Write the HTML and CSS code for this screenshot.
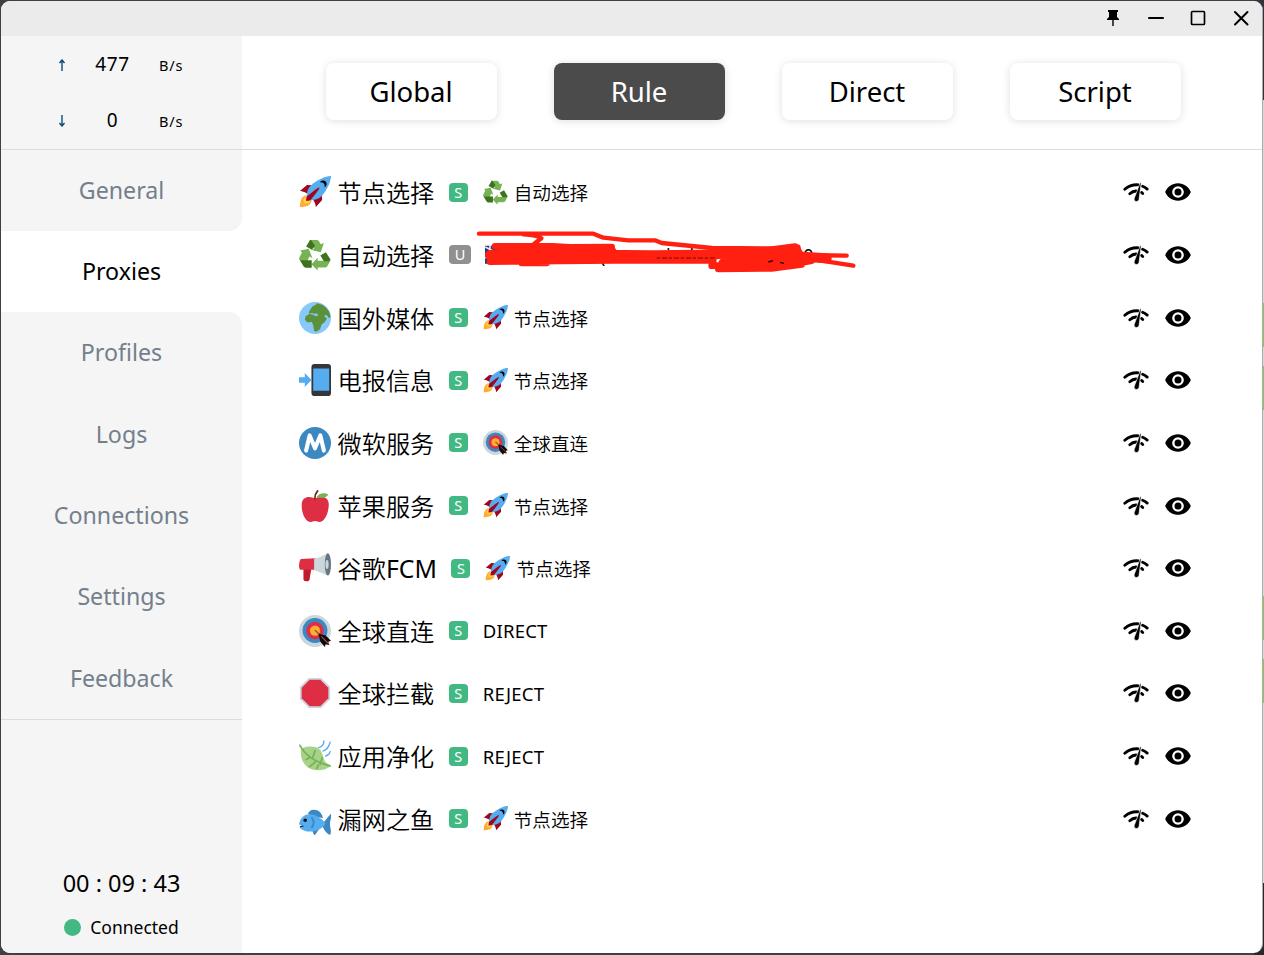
FILE: index.html
```html
<!DOCTYPE html>
<html lang="zh-CN">
<head>
<meta charset="utf-8">
<title>Proxies</title>
<link rel="stylesheet" href="styles.css">
</head>
<body>
<svg class="defs" aria-hidden="true">
  <symbol id="rocket" viewBox="0 0 36 36"><path fill="#A0041E" d="M1 17l8-7 16 1 1 16-7 8s0-6-6-12-12-6-12-6z"/><path fill="#FFAC33" d="M1 35s0-8 3-11 11-2.800 11-2.800S15 29 12 32 1 35 1 35z"/><circle fill="#FFCC4D" cx="9" cy="27" r="4"/><path fill="#55ACEE" d="M36 0S26 0 14 10c-6 5-6 14-4 16s11 2 16-4C36 10 36 0 36 0z"/><path d="M27 5c-1.600 0-3 1-3.600 2.400.5-.2 1-.4 1.600-.4a4 4 0 0 1 3.600 5.600C30 12 31 10.600 31 9a4 4 0 0 0-4-4z"/><path fill="#A0041E" d="M8 28s0-4 1-5 13-11 14-10-9 13-10 14-5 1-5 1z"/></symbol>
  <symbol id="recycle" viewBox="0 0 36 36"><path fill="#77B255" d="M12 1h8q1.500 0 2.200 1.300L24.500 6l3.500-1.500L24.500 15 14 12.500l3.300-2L12 3zM1.500 13L11 11l4 10.300-3.300-1.600L7.500 29 .8 24q-1.200-2 0-4l2.500-4.500zM35 22q1 1.500 0 3l-3 5.500q-.8 1.500-2.500 1.500H21v3.500l-7-7 7-7.500v3.500h8z"/><path fill="#3E721D" d="M12.500 1L8 8.500l6.500 3.700L18 7.500l-4.200-6zM1 24l4.200 7q.8 1.300 2.500 1.300h6.600v-8.500H7.500zM24 18.500l6.200-3.700L35 22.500 34 25h-6z"/></symbol>
  <symbol id="globe" viewBox="0 0 36 36"><circle cx="18" cy="18" r="18" fill="#88C9F9"/><path fill="#5C913B" d="M15 5l4-2 1-1.500 6 1.500 4 3 4 5 1.500 6-2 1-2-3-3-.5 1 3 2 1-3 4.500-3 2-2 6-4 2.500-2.500-1-1-6-1.500-4-5 .5-3-3 1-4 4-2.500 4 .5 2 1.500 4 .3-1-3-4 .5-1.500-1-4 1 .5-3z"/></symbol>
  <symbol id="phone" viewBox="0 0 36 36"><rect x="14" width="22" height="36" rx="3.500" fill="#31373D"/><path fill="#55ACEE" d="M16 5h18v25H16zM14 18L6.500 10v5H0v6h6.500v5z"/></symbol>
  <symbol id="metro" viewBox="0 0 36 36"><circle cx="18" cy="18" r="18" fill="#3B88C3"/><path d="M8 26.500l4-17 6 14.500 6-14.500 4 17" fill="none" stroke="#fff" stroke-width="4.600" stroke-linecap="round" stroke-linejoin="round"/></symbol>
  <symbol id="dart" viewBox="0 0 36 36"><circle cx="18" cy="18" r="18" fill="#CCD6DD"/><circle cx="18" cy="17.500" r="14" fill="#3B88C3"/><circle cx="18" cy="17.500" r="9.800" fill="#DD2E44"/><circle cx="18" cy="17.500" r="5.800" fill="#FFAC33"/><path stroke="#8b4b30" stroke-width="1.500" d="M18 17l11 11"/><path d="M22 21l8 2 6 6-3 1 1 4-4-1-1 3-5-6z" fill="#12090a"/><path d="M25 24l9 9" stroke="#A8544C" stroke-width="1.200"/></symbol>
  <symbol id="apple" viewBox="0 0 36 36"><path fill="#DD2E44" d="M18 10c4-4 16-4 15.500 7C33 28 28 36 23 36c-2 0-3-1-5-1s-3 1-5 1C8 36 3 28 3 17 3 6 14 7 18 10z"/><path fill="#77B255" d="M20 8c3-5 9-5 13-3-2 4-9 5-13 3z"/><path d="M18 10q-.5-5 3-9" fill="none" stroke="#662113" stroke-width="1.800" stroke-linecap="round"/></symbol>
  <symbol id="horn" viewBox="0 0 36 36"><path fill="#BE1931" d="M5 18h9l-2 12q0 3-4 3-3 0-3-2z"/><path fill="#DD2E44" d="M2 8l17-1v13L2 20q-2 0-2-5t2-7z"/><path fill="#CCD6DD" d="M17 7.500q8-1.500 15-6v25q-7-4-15-6z"/><ellipse cx="32.500" cy="14" rx="3.500" ry="12.500" fill="#66757F"/><ellipse cx="31.500" cy="14" rx="1.800" ry="5" fill="#CCD6DD"/></symbol>
  <symbol id="stop" viewBox="0 0 36 36"><path fill="#CCD6DD" d="M11 1h14l10 10v14L25 35H11L1 25V11z"/><path fill="#DD2E44" d="M12 3h12l9 9v12l-9 9H12l-9-9V12z"/></symbol>
  <symbol id="leaf" viewBox="0 0 36 36"><path fill="#A6D388" d="M2 10c6-3 11-3 16-2 8 2 8 8 10 13 1 4 4 6 8 8-8 7-22 7-29-1C2 22 2 16 2 10z"/><path d="M1 6q9 17 34 23M12 20l-4 2M18 25l-6 5M15 21l3-9M24 27l2-7M22 28l-2 4" fill="none" stroke="#77B255" stroke-width="2" stroke-linecap="round"/><path d="M28 1q0 6-6 7.500M35 2.500q-2 8-8 10M35 13q-1 4-5 5" fill="none" stroke="#55ACEE" stroke-width="1.500" stroke-linecap="round"/></symbol>
  <symbol id="fish" viewBox="0 0 36 36"><path fill="#3B88C3" d="M10 12q3-6 9-4 6 1 8 9l-13-2zM26 23c4-3 5-6 10-11 1 6-2 9-1 13 0 4 2 6 0 11-4-2-8-6-9-13zM15 30l8-1-5 7q-2 0-3-6z"/><path fill="#55ACEE" d="M0 24C3 8 20 10 30 23c-6 10-22 12-29 5l4-1z"/><circle cx="7" cy="19.500" r="2" fill="#111"/><path d="M14 16q5 6 0 12" fill="none" stroke="#3B88C3" stroke-width="2"/><path d="M1 27l4-1" stroke="#292F33" stroke-width="1.500"/></symbol>
  <symbol id="check" viewBox="0 0 26 22"><path d="M1.800 8.300Q7.500 3.200 15.500 3.800M19.500 5.200q2.500 1 4.700 2.900M6.800 12.700q2.900-2.600 6.200-2.700M18.500 11.400l1.200 1.100" fill="none" stroke="#000" stroke-width="2.800" stroke-linecap="round"/><path d="M17.300 1.500q1-.2.800 1L16 18.500q-.5 2-2.500 2-3 0-2.300-3z" stroke="#fff" stroke-width=".6"/></symbol>
  <symbol id="eye" viewBox="0 0 24 24"><path fill-rule="evenodd" d="M12 4.500C7 4.500 2.700 7.600 1 12c1.700 4.400 6 7.500 11 7.500s9.300-3.100 11-7.500c-1.700-4.400-6-7.500-11-7.500zM12 17a5 5 0 1 1 0-10 5 5 0 0 1 0 10zm0-8a3 3 0 1 0 0 6 3 3 0 0 0 0-6z"/></symbol>
</svg>
<div class="window">
  <header class="titlebar">
    <svg width="20" height="20" viewBox="0 0 20 20"><path d="M5 2h10v2h-1v5l2 2v1H4v-1l2-2V4H5z"/><path d="M10 11v7" stroke="#000" stroke-width="1.400"/></svg>
    <svg width="20" height="20" viewBox="0 0 20 20"><path d="M3 10h14" stroke="#000" stroke-width="2" stroke-linecap="round"/></svg>
    <svg width="20" height="20" viewBox="0 0 20 20"><rect x="3.500" y="3.500" width="13" height="13" rx="1" fill="none" stroke="#000" stroke-width="1.700"/></svg>
    <svg width="20" height="20" viewBox="0 0 20 20"><path d="M4 4l12.500 12.500M16.500 4L4 16.500" stroke="#000" stroke-width="2" stroke-linecap="round"/></svg>
  </header>
  <div class="content">
    <aside class="sidebar">
      <div class="traffic">
        <div class="speed"><svg class="arrow" viewBox="0 0 8 12"><path d="M4 12V1M1.500 4L4 1l2.500 3"/></svg><span class="value">477</span><span class="unit">B/s</span></div>
        <div class="speed"><svg class="arrow" viewBox="0 0 8 12"><path d="M4 0v11M1.500 8L4 11l2.500-3"/></svg><span class="value">0</span><span class="unit">B/s</span></div>
      </div>
      <nav class="nav">
        <a class="item above">General</a><a class="item active">Proxies</a><a class="item below">Profiles</a><a class="item">Logs</a><a class="item">Connections</a><a class="item">Settings</a><a class="item">Feedback</a>
      </nav>
      <div class="status"><div class="clock">00 : 09 : 43</div><div class="connected"><i class="dot"></i>Connected</div></div>
    </aside>
    <main class="main">
      <div class="modes"><button class="mode">Global</button><button class="mode selected">Rule</button><button class="mode">Direct</button><button class="mode">Script</button></div>
      <div class="groups">
        <div class="row"><svg class="emoji"><use href="#rocket"/></svg><span class="name">节点选择</span><span class="badge">S</span><span class="now"><svg class="mini"><use href="#recycle"/></svg><span class="cjk">自动选择</span></span><svg class="check"><use href="#check"/></svg><svg class="eye"><use href="#eye"/></svg></div>
        <div class="row"><svg class="emoji"><use href="#recycle"/></svg><span class="name">自动选择</span><span class="badge auto">U</span>
          <svg class="scribble" viewBox="0 0 1200 165"><path fill="#203a80" d="M45 62h100v54H45z"/><path d="M46 66l35 18M46 99l35-20M60 60v50" stroke="#e5e5f5" stroke-width="5"/><text x="390" y="114" class="hidden-name">(</text><text x="555" y="110" class="hidden-name">nisal</text><text x="820" y="110" class="hidden-name">l</text><text x="880" y="110" class="hidden-name">om</text><text x="1000" y="112" class="hidden-name">0</text>
          <g fill="none" stroke="#ff2012" stroke-linecap="round" stroke-linejoin="round"><path stroke-width="13" d="M27 26h343l30 12 75 8h80l20 8 150 15 250 2M160 28q45 3 54 12l-22 17M985 65l5 25 140 2M1010 100l140 22"/><path stroke-width="20" d="M75 64h173l50 3 127-1M370 84l180 2 280-3 145-18M60 90h480l200 3 230-18M60 110l370-4h300M155 114h75M725 122h220l80-15M745 132l160-2 90-12"/><path stroke-width="30" d="M100 80h325M60 90l455 8M800 95l150-3 120 8M760 115l230-15M975 72l10 15"/></g><path d="M560 99h175" stroke="#7a0805" stroke-width="3" stroke-dasharray="10 6 15 5"/><path d="M895 111l14-4M930 112l12 3" stroke="#170202" stroke-width="4"/></svg>
          <svg class="check"><use href="#check"/></svg><svg class="eye"><use href="#eye"/></svg></div>
        <div class="row"><svg class="emoji"><use href="#globe"/></svg><span class="name">国外媒体</span><span class="badge">S</span><span class="now"><svg class="mini"><use href="#rocket"/></svg><span class="cjk">节点选择</span></span><svg class="check"><use href="#check"/></svg><svg class="eye"><use href="#eye"/></svg></div>
        <div class="row"><svg class="emoji"><use href="#phone"/></svg><span class="name">电报信息</span><span class="badge">S</span><span class="now"><svg class="mini"><use href="#rocket"/></svg><span class="cjk">节点选择</span></span><svg class="check"><use href="#check"/></svg><svg class="eye"><use href="#eye"/></svg></div>
        <div class="row"><svg class="emoji"><use href="#metro"/></svg><span class="name">微软服务</span><span class="badge">S</span><span class="now"><svg class="mini"><use href="#dart"/></svg><span class="cjk">全球直连</span></span><svg class="check"><use href="#check"/></svg><svg class="eye"><use href="#eye"/></svg></div>
        <div class="row"><svg class="emoji"><use href="#apple"/></svg><span class="name">苹果服务</span><span class="badge">S</span><span class="now"><svg class="mini"><use href="#rocket"/></svg><span class="cjk">节点选择</span></span><svg class="check"><use href="#check"/></svg><svg class="eye"><use href="#eye"/></svg></div>
        <div class="row"><svg class="emoji"><use href="#horn"/></svg><span class="name">谷歌<span class="fcm">FCM</span></span><span class="badge">S</span><span class="now"><svg class="mini"><use href="#rocket"/></svg><span class="cjk">节点选择</span></span><svg class="check"><use href="#check"/></svg><svg class="eye"><use href="#eye"/></svg></div>
        <div class="row"><svg class="emoji"><use href="#dart"/></svg><span class="name">全球直连</span><span class="badge">S</span><span class="now latin">DIRECT</span><svg class="check"><use href="#check"/></svg><svg class="eye"><use href="#eye"/></svg></div>
        <div class="row"><svg class="emoji"><use href="#stop"/></svg><span class="name">全球拦截</span><span class="badge">S</span><span class="now latin">REJECT</span><svg class="check"><use href="#check"/></svg><svg class="eye"><use href="#eye"/></svg></div>
        <div class="row"><svg class="emoji"><use href="#leaf"/></svg><span class="name">应用净化</span><span class="badge">S</span><span class="now latin">REJECT</span><svg class="check"><use href="#check"/></svg><svg class="eye"><use href="#eye"/></svg></div>
        <div class="row"><svg class="emoji"><use href="#fish"/></svg><span class="name">漏网之鱼</span><span class="badge">S</span><span class="now"><svg class="mini"><use href="#rocket"/></svg><span class="cjk">节点选择</span></span><svg class="check"><use href="#check"/></svg><svg class="eye"><use href="#eye"/></svg></div>
      </div>
    </main>
  </div>
</div>
</body>
</html>
```
FILE: styles.css
```css
* { box-sizing: border-box; }
html { background: #3d4143; }
body {
  margin: 0; padding: 1px 1px 2px 1px; height: 955px; overflow: hidden; color: #000;
  font-family: "Noto Sans", "Noto Sans CJK SC", sans-serif;
  background: linear-gradient(#30353a 0 100px, #d8d8d8 100px 303px, #87c661 303px 347px, #d8d8d8 347px 366px, #87c661 366px 410px, #d8d8d8 410px 596px, #87c661 596px 640px, #d8d8d8 640px 659px, #87c661 659px 703px, #d8d8d8 703px 883px, #252b2d 883px) right / 10px 100% no-repeat, #3d4143;
}
.defs { position: absolute; width: 0; height: 0; }
.window { height: 952px; border-radius: 9px; overflow: hidden; background: #fff; border-right: 1px solid #aaa; display: flex; flex-direction: column; }
.titlebar { height: 35px; background: #ebebeb; display: flex; justify-content: flex-end; align-items: center; gap: 22.700px; padding: 0 11px 2px 0; flex: none; }
.content { display: flex; flex: 1; }
.sidebar { width: 241px; display: flex; flex-direction: column; }
.traffic { height: 114px; background: #f5f5f5; border-bottom: 1px solid #dcdcdc; }
.speed { height: 56px; display: flex; align-items: center; padding: 0 0 1px 57px; }
.arrow { width: 8px; height: 12px; margin-top: 2px; fill: none; stroke: #0d4b79; stroke-width: 1.400; }
.value { width: 93px; text-align: center; font-size: 19px; letter-spacing: .6px; }
.unit { font-size: 14.500px; letter-spacing: .9px; margin-top: 2px; }
.nav { height: 569px; display: grid; grid-template-rows: 81px 81px repeat(5, 1fr); }
.item { display: flex; align-items: center; justify-content: center; background: #f5f5f5; color: #73808c; font-size: 23.200px; padding-bottom: 1px; }
.item.active { background: #fff; color: #000; }
.above { border-bottom-right-radius: 13px; }
.below { border-top-right-radius: 13px; }
.status { flex: 1; background: #f5f5f5; border-top: 1px solid #dcdcdc; display: flex; flex-direction: column; justify-content: flex-end; align-items: center; padding-bottom: 13px; }
.clock { font-size: 23.500px; line-height: 32px; margin-bottom: 15px; }
.connected { font-size: 17.500px; line-height: 26px; display: flex; align-items: center; gap: 9px; }
.dot { width: 17px; height: 17px; border-radius: 50%; background: #42b983; }
.main { flex: 1; }
.modes { height: 114px; border-bottom: 1px solid #dcdcdc; padding: 27px 81px 0 84px; display: flex; justify-content: space-between; }
.mode { width: 171px; height: 57px; border: 0; border-radius: 8px; background: #fff; box-shadow: 0 1px 9px rgba(0,0,0,.13); font: 27.500px "Noto Sans", sans-serif; color: #000; padding: 0 1px 1px 0; }
.mode.selected { background: #4b4b4b; color: #fff; }
.groups { padding: 11px 70px 0 57px; }
.row { height: 62.650px; display: flex; align-items: center; position: relative; }
.emoji { width: 32px; height: 32px; margin-right: 6.500px; }
.name { font-size: 24.200px; line-height: 34px; padding-top: 2px; font-weight: 350; }
.fcm { font-size: 24.800px; font-weight: 400; line-height: 1; }
.badge { min-width: 19px; height: 19px; padding: 0 5px; margin-left: 14.500px; margin-right: 15px; border-radius: 4px; background: #42b983; color: #fff; font-size: 14.500px; line-height: 18px; text-align: center; }
.auto { background: #909090; padding: 0 6px; }
.now { display: flex; align-items: center; font-size: 18.600px; font-weight: 350; line-height: 26px; }
.cjk { padding-top: 2px; }
.latin { font-weight: 400; font-size: 18.500px; letter-spacing: .2px; padding-top: 1px; }
.mini { width: 25px; height: 25px; margin-right: 6px; }
.check { width: 26px; height: 22px; margin-left: auto; margin-right: 15.500px; }
.eye { width: 28px; height: 28px; }
.scribble { position: absolute; left: 171px; top: 1px; width: 400px; height: 55px; }
.hidden-name { font-size: 54px; }
```
